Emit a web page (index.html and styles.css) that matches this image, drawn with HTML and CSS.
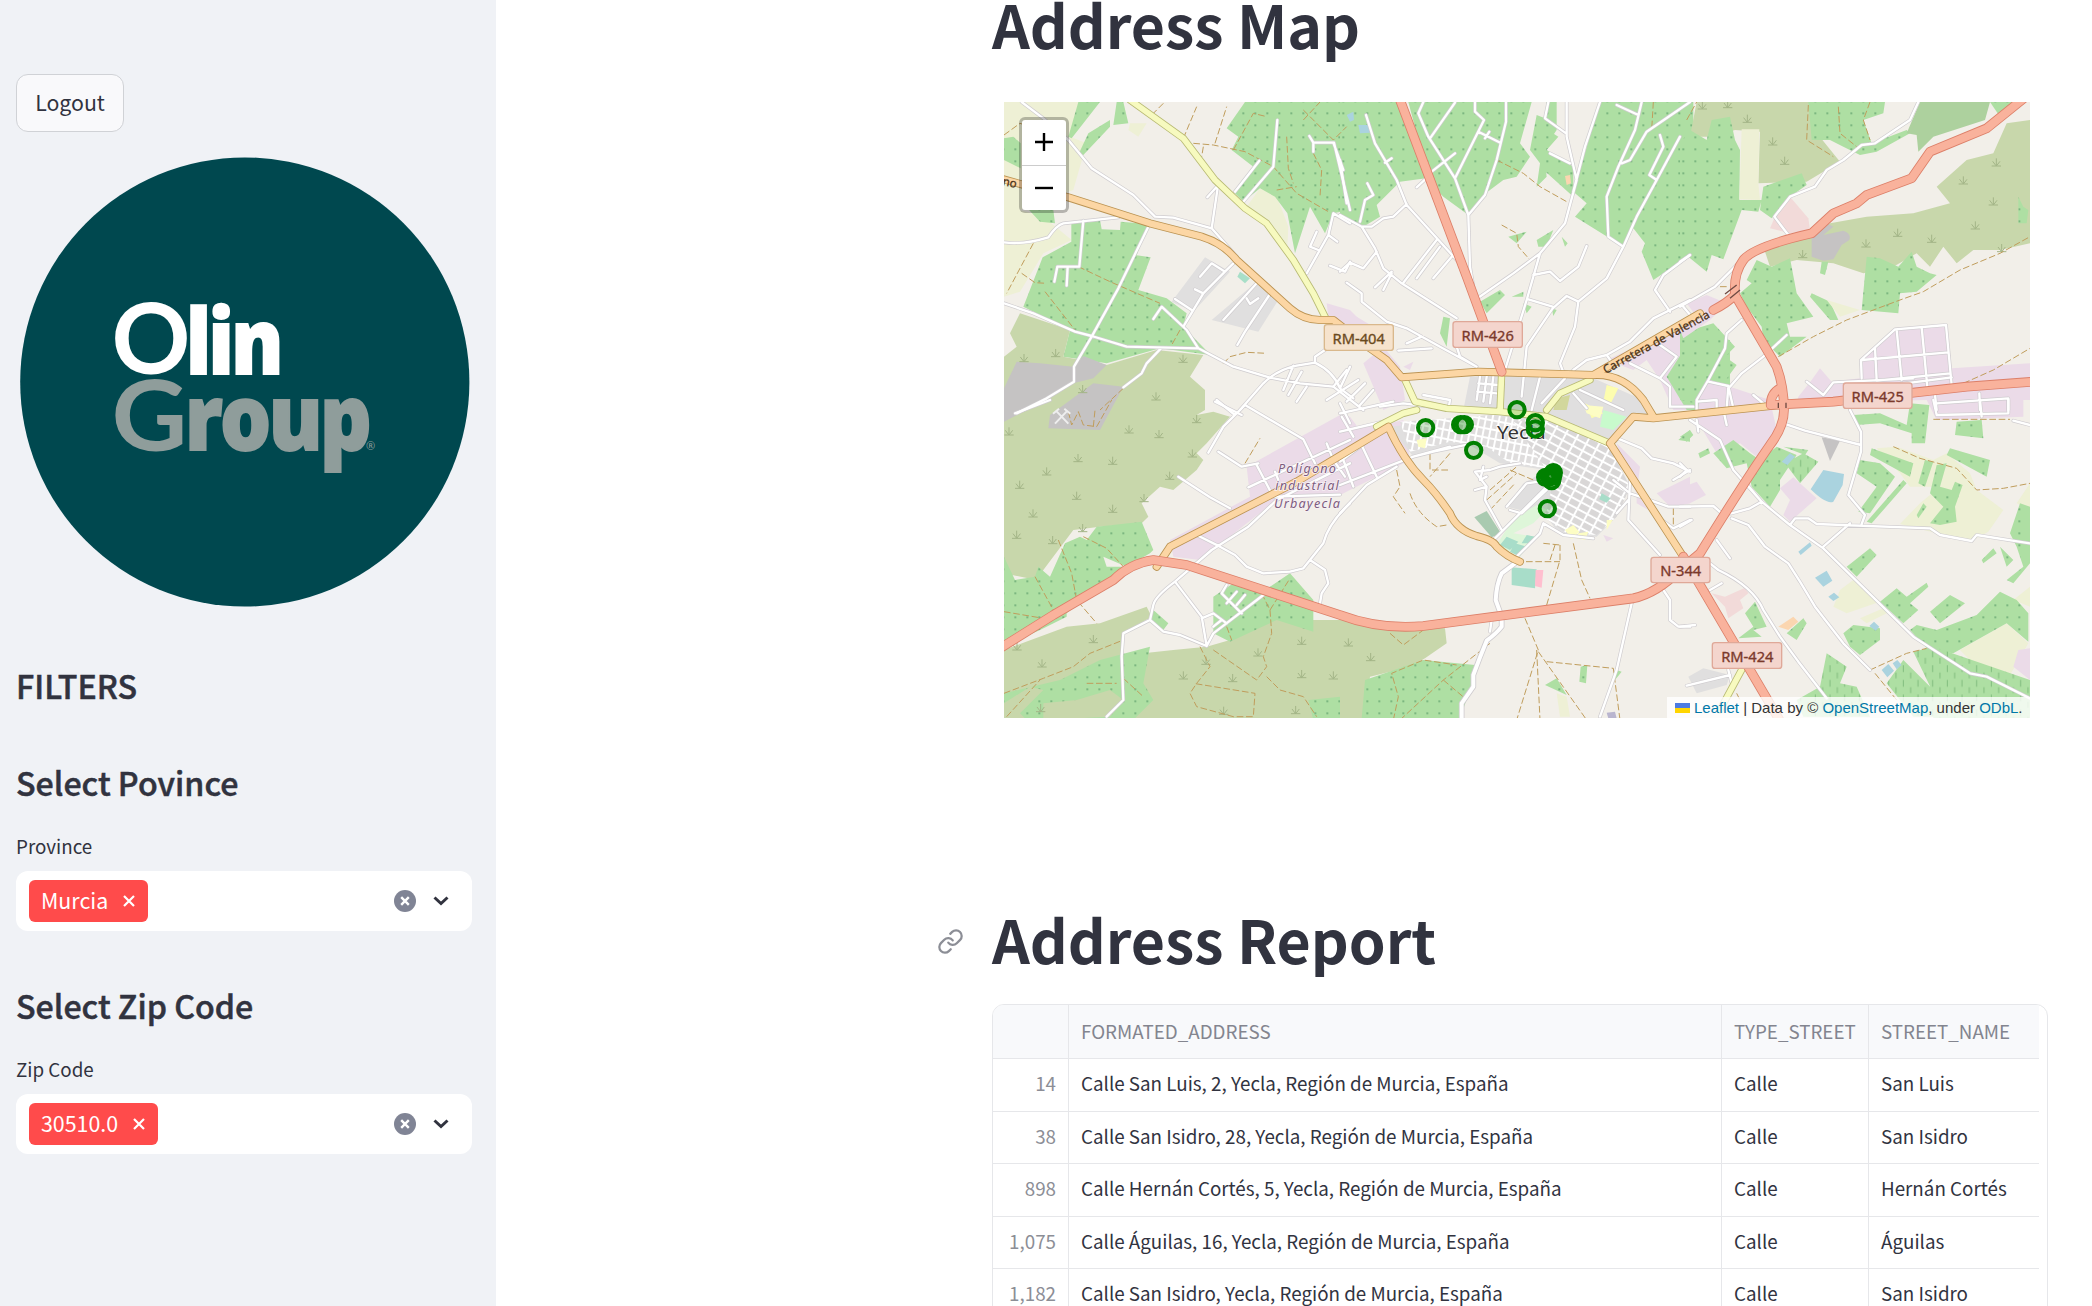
FILE: index.html
```html
<!DOCTYPE html>
<html lang="en">
<head>
<meta charset="utf-8">
<title>Address Map</title>
<link rel="stylesheet" href="styles.css">
</head>
<body>
<div class="app">
<aside class="sidebar">
  <button class="logout">Logout</button>
  <svg class="logo" viewBox="20 157 450 450" role="img" aria-label="Olin Group">
    <circle cx="244.8" cy="382" r="224.6" fill="#00484f"/>
    <g fill="#fff" stroke="#fff">
      <text class="logo-round" x="111.500" y="374" textLength="79" lengthAdjust="spacingAndGlyphs">O</text>
      <text class="logo-heavy" x="186" y="373.500" textLength="95" lengthAdjust="spacingAndGlyphs">lin</text>
    </g>
    <g fill="#8f9d9b" stroke="#8f9d9b">
      <text class="logo-round" x="111.500" y="451" textLength="76" lengthAdjust="spacingAndGlyphs">G</text>
      <text class="logo-heavy" x="185" y="449.500" textLength="184" lengthAdjust="spacingAndGlyphs">roup</text>
      <text class="logo-mark" x="366" y="450" stroke="none">®</text>
    </g>
  </svg>
  <h2 class="filters">FILTERS</h2>
  <section class="filter">
    <h2>Select Povince</h2>
    <label>Province</label>
    <div class="select">
      <span class="tag">Murcia<svg viewBox="0 0 12 12"><path d="M1 1L11 11M11 1L1 11"/></svg></span>
      <svg class="clear" viewBox="0 0 22 22"><circle cx="11" cy="11" r="11"/><path d="M7.200 7.200L14.800 14.800M14.800 7.200L7.200 14.800"/></svg>
      <svg class="chevron" viewBox="0 0 16 10"><path d="M1.500 1.500L8 7.500L14.500 1.500"/></svg>
    </div>
  </section>
  <section class="filter">
    <h2>Select Zip Code</h2>
    <label>Zip Code</label>
    <div class="select">
      <span class="tag">30510.0<svg viewBox="0 0 12 12"><path d="M1 1L11 11M11 1L1 11"/></svg></span>
      <svg class="clear" viewBox="0 0 22 22"><circle cx="11" cy="11" r="11"/><path d="M7.200 7.200L14.800 14.800M14.800 7.200L7.200 14.800"/></svg>
      <svg class="chevron" viewBox="0 0 16 10"><path d="M1.500 1.500L8 7.500L14.500 1.500"/></svg>
    </div>
  </section>
</aside>
<main class="content">
<h1>Address Map</h1>
<div class="map">
<svg class="tiles" viewBox="12 6 3078 1848" preserveAspectRatio="none">
<defs>
  <pattern id="orchard" patternUnits="userSpaceOnUse" x="-8" y="-14" width="36" height="36"><rect width="36" height="36" fill="#aedfa3"/><circle cx="18" cy="18" r="3" fill="#6aa874"/></pattern>
  <pattern id="vineyard" patternUnits="userSpaceOnUse" width="44" height="44"><rect width="44" height="44" fill="#aedfa3"/><path d="M10 4V24M32 26V43" stroke="#81bd7e" stroke-width="3"/></pattern>
  <pattern id="blocks" patternUnits="userSpaceOnUse" width="34" height="23" patternTransform="rotate(28)"><rect width="34" height="23" fill="#fff"/><rect x="3" y="3" width="28" height="17" fill="#d9d7d7"/></pattern>
  <pattern id="oldtown" patternUnits="userSpaceOnUse" width="20" height="27" patternTransform="rotate(11)"><rect width="20" height="27" fill="#fff"/><rect x="3" y="3" width="14" height="21" fill="#dfdddd"/></pattern>
  <symbol id="shrub" viewBox="0 0 30 28" overflow="visible"><path d="M1 25H29M15 25V2M14 24L4 11M16 24L26 11" fill="none" stroke="#a3b587" stroke-width="3"/></symbol>
  <g id="lanes">
    <path d="M65 6L130 55 205 120 275 205 400 285 465 350 520 353 635 385 710 470M12 427Q70 435 145 412Q170 375 190 370L355 352M250 362L238 500H172L163 545M203 500L200 557M445 380L355 565 275 710 222 800V845L140 895 50 940M12 610L100 640 225 695 275 708 380 740 595 745 700 800 810 833 900 850 1000 860M460 657L485 620 560 690 595 745M485 743L440 790 425 820 370 862M700 490L675 515 635 490 600 530M675 515L610 580 550 680M585 568L610 580M525 597L575 630M770 550L670 660M740 595L750 612 775 595M808 585L735 695 712 735M655 250L635 385M655 255L622 292M705 275L778 182M730 305L820 200 832 60M928 108L940 128H1002L1050 330M940 130V155M1000 128L1030 210M1050 370L1000 340 985 405 920 520M985 405L1012 425M950 395L930 440 955 450M990 497L1035 515 1050 485M975 750L945 770V788L890 797Q830 810 790 850L720 930M945 788Q1000 815 1020 865L1060 895M1020 865L1050 800M880 797L850 870M905 815L865 885M920 860L890 905M645 905L725 945"/>
    <g transform="translate(1020)">
    <path d="M78 45L105 130 170 240 200 315 350 480M135 188L155 175M345 8L270 115M250 6L235 40 265 110 345 235 385 345 390 500 400 560M275 215L345 160M230 262L262 232M405 6V35L432 60 345 235M415 95L478 127M435 115L448 95M498 6V65L470 180 435 285 385 345M625 6L615 55 675 98M680 6V110L710 240 675 370 600 460 560 600 495 810M780 6L735 140 700 275M630 160L690 190M600 460L520 520 405 600M830 15L895 45M905 6L885 90 835 200 800 290 805 410 850 440M845 190L870 180 920 95 1050 6M1020 110L950 240 890 350 850 440 800 535 715 605 680 588 638 625 560 740 545 890M580 525L630 515 660 543 715 500 740 438M565 598L638 620M715 605L705 680 660 790 675 830M950 240L928 225 970 140 960 105M0 345L65 380 95 380 130 355 160 350 200 312M60 365L75 300 100 285 82 250M0 180L20 310M65 380L105 445 130 505 185 550 350 655M0 515L30 488 70 505 110 455M155 515L105 562M155 520L130 570M290 420L190 548M300 440L230 535M335 470L280 535M20 548L65 580V605L140 665 200 685 300 740 410 800M200 730L245 710M175 752L275 745M410 800L360 770 350 740M1050 465L970 525 945 570 990 635M700 810L740 780 800 765 870 725 940 655 1050 600M800 765L825 800M870 790L960 835 1010 770 960 735M960 835L990 860V920H1060M20 810L-20 860 70 930M55 840L-40 900M75 850L20 905M100 870L60 915M120 920L190 910 350 930M250 885L330 900 325 930M420 830L410 900M440 830L430 905M460 830L450 910M415 850L475 855M412 875L470 880M600 830L575 930M675 835L605 910M700 880L740 925M720 870L850 930"/>
    </g>
    <g transform="translate(2040)">
    <path d="M715 6L690 60 585 130 545 135 490 180 440 210 405 260 330 290 283 350 325 405M175 490L105 560 0 620M0 485L30 465M10 620L35 650M185 660L140 700 135 745 85 840 50 900V930M320 705L250 770 185 820 150 860M85 845L145 858 160 925M50 905L110 900V930M145 860L140 925M220 885L250 910M380 845L430 885 460 847 700 835M545 835L543 780 645 688 798 675 815 855M545 780L805 757M585 745L590 840M650 690L665 840M725 682L742 860M590 842L810 820M600 860L815 832M765 885L770 930M898 880L900 930M770 910L985 895V930"/>
    </g>
    <g transform="translate(0 900)">
    <path d="M45 40L150 0M650 0L705 45 735 15 910 118 945 190M735 15L670 80 625 158M655 155L725 200 775 190M770 195L820 290M745 262L1050 120M825 215L835 240M980 130L1000 180 1035 230M1025 50L1060 110M535 230L630 292 690 325M1050 310Q985 370 970 430L930 480 910 505 870 515 790 520 740 500 705 465 660 440 590 405M1050 190L940 245 830 300 745 380 635 450 525 545Q465 590 460 615L450 660 370 700 365 770 370 900 320 950M450 660L490 695 540 705 620 738 605 650 525 545M605 655L640 640 680 670M620 738L640 700 790 585M680 555L665 580 725 640M680 610L710 575M710 615L735 585M640 680L665 660M930 480L975 510 985 550 965 580 960 610M820 290L1020 284"/>
    </g>
    <g transform="translate(1020 900)">
    <path d="M0 40L160 5M0 95L150 60M30 70L0 10M0 185L120 95M60 125L110 230M10 180L40 260M0 255L220 170 330 140M0 340L80 255 170 200M220 170L280 155 400 130M610 370L600 400 530 470M485 390L435 300 440 260 405 270M440 260L405 215 450 210 480 200 540 190M440 230L420 240 430 200M465 415L640 240M500 320L560 250 630 240M510 330L545 340 620 270M820 110L905 145 935 175 1000 190 1050 215M820 240L870 280 900 290M870 240L865 360 960 465M900 290L985 320 1050 320M830 340L865 300M970 570L990 600V660L1015 680H1050M875 610L830 810 780 950M1000 240L1050 210M965 360L1000 385 1050 360M455 660L450 695M610 370L670 405 760 415"/>
    </g>
    <g transform="translate(2040 900)">
    <path d="M30 60L120 120 160 210 245 305 330 375 430 445 700 710 870 820 920 830 1050 895M50 60L55 95M130 30L140 75M310 70L375 92 543 135M0 320L100 318 125 340 155 340 210 325 245 305M155 355L205 375 255 440 325 490 360 545 405 620 490 730 570 810M90 490L115 510Q220 560 250 630L300 710 355 785 440 895M245 305L190 240 235 200M510 30L543 95V155L505 285 555 345 545 372M330 375L345 355H385L410 372 750 385 780 405 875 423 890 405 1050 430M430 440L510 370M770 45L985 40V0M900 0L905 50M770 45L760 0M1000 62L1050 75M0 190L20 210 0 230M110 420L150 475M90 570L125 550M0 680L45 675M20 857L150 825M145 810L155 850M0 380L35 360"/>
    </g>
  </g>
  <path id="white-road" d="M1545 1390L1505 1420Q1490 1450 1487 1500L1505 1550V1580Q1490 1600 1460 1622Q1440 1670 1420 1725V1760L1385 1810V1860"/>
  <path id="yellow-road" d="M390 0L550 115 645 240 735 325 800 370 880 480 940 580 980 660M1215 840L1245 905 1340 925 1500 935 1640 950 1830 1030M1505 820L1500 935M1770 840L1680 880 1640 930M1130 980L1210 940 1250 930M2230 1700L2160 1830"/>
  <path id="orange-road" d="M0 235L205 292 450 370 605 410Q670 430 710 480L870 625Q910 660 960 660H1000L1110 745 1160 780 1205 832 1435 815 1780 825Q1870 820 1930 900L1960 950M470 1400L510 1340 890 1145 1165 980Q1210 1080 1270 1140Q1310 1180 1350 1240Q1370 1290 1430 1308Q1480 1320 1490 1340Q1520 1370 1560 1385M1830 1030L1900 950 1960 955 2340 915M1830 1030L2050 1370M1780 825L2100 640"/>
  <path id="red-road" d="M1200 0L1400 530 1505 815M0 1645L160 1545 340 1440Q390 1390 460 1380L560 1395 1020 1545Q1140 1590 1270 1578L1900 1495Q1970 1480 2040 1410L2100 1360Q2230 1150 2310 1035Q2352 980 2352 930Q2352 860 2330 800L2205 585Q2200 520 2230 480Q2260 440 2435 400L2500 340 2570 310 2600 285 2735 235 2790 155 2960 85 3090 -20M2205 585Q2180 610 2140 630M2312 915L2500 905 2900 860 3100 845M2050 1370L2350 1880M2312 915Q2312 880 2340 865"/>
</defs>
<rect x="0" y="0" width="3100" height="1860" fill="#f2efe9"/>
<g class="land">
  <path class="farm" d="M12 6H290L210 110 260 130 220 270 60 330 130 350 215 420 130 460 60 575 12 590ZM390 70L440 70 415 110 385 90ZM780 265L830 290 850 340 865 380 862 440 800 370 740 320Z"/>
  <path class="orchard" d="M12 115L40 110 62 130V205L12 180ZM235 6H300L215 115 205 110ZM350 6H370L385 70 340 75ZM237 160L265 100 330 60V80L250 165ZM78 320L160 330 165 370 120 365ZM230 365L300 360 305 388 360 390 362 365 445 372 410 466 452 472 415 570 500 595 560 640 550 680 632 765 480 745 320 790 190 770 210 690 70 620 128 472 214 425V370ZM735 6H1050V330L1000 340 975 400 930 320 885 460 862 340 825 290 780 265 730 305 705 280 760 200 695 150 715 110 680 85Z"/>
  <path class="scrub" d="M60 640L210 690 190 770 320 795 470 750 610 765 570 830 615 870V930L590 945 640 935 690 950 620 1030 590 1060 610 1080 590 1110 520 1170 480 1160 425 1210 445 1250 425 1270 300 1280 220 1290 130 1410 110 1440 12 1420V770L50 740 30 700ZM12 1650L200 1580 300 1570 440 1520 455 1550 370 1600 365 1760 320 1860H12ZM430 1660L520 1650 620 1640 690 1620 840 1540 940 1560H1020L1335 1585 1340 1630 1275 1675 1230 1700 1110 1730 1090 1860H400Z"/>
  <path class="quarry" d="M12 865L50 785 120 790 220 800 250 768 320 795 280 835 220 850 140 900 12 965ZM150 945L280 850 370 860 300 990 145 985Z"/>
  <path class="orchard" d="M12 1370L45 1440 105 1430 115 1400 150 1430 195 1330 240 1310 260 1320 290 1280 425 1265 460 1350 450 1360 380 1400 310 1370 320 1400 370 1400 200 1540 200 1550 120 1590 12 1640ZM460 1530L505 1570 490 1590 450 1560ZM640 1490L700 1450 780 1480 870 1420 940 1500V1595L830 1560 690 1625 640 1600ZM300 1680L450 1640 430 1750 460 1800 400 1860H12V1780L180 1740ZM925 1800L1020 1790V1860H940Z"/>
  <path class="scrub" d="M12 1860V1810L90 1760 130 1770 60 1840 80 1860ZM130 1810L230 1800 330 1770 370 1800 330 1850 130 1860Z"/>
  <path class="residential" d="M615 472L690 515 580 635 515 605ZM770 545L835 600 775 695 635 660Z"/>
  <path class="industry" d="M980 610L1050 630 1100 680 1030 690 985 650ZM740 1100L1020 945 1050 950 1080 990 1210 960 1230 1080 1020 1185 830 1200 600 1380 520 1370 510 1320 750 1190ZM1090 790L1150 740 1200 800 1215 900 1150 930Z"/>
  <path fill="#a8dfc8" d="M720 515L750 535 735 550 712 530Z"/>
</g>
<g class="land two" transform="translate(1020)">
  <path class="orchard" d="M0 6H170L258 235 180 245 110 315 120 350 70 380 0 345ZM205 6H575L540 130 570 170 530 230 490 240 430 285 385 345 310 290 270 250ZM590 45L615 55 620 6H650L650 90 610 150 620 230 590 260 600 190 570 150ZM600 75L655 110 620 150 700 200 700 290 600 200ZM780 6H1060V460L940 540 905 455 915 430 880 385 850 440 705 350 740 310 700 275ZM505 410L560 395 530 430ZM590 420L640 390 620 440 595 440ZM665 410L683 430 675 440ZM420 605L480 570 495 585 440 640ZM515 590L550 575 550 590ZM300 700L310 650 330 655 320 740ZM550 610L575 620 560 640ZM635 625L650 630 640 648Z"/>
  <path class="industry" d="M800 780L1000 690 1060 640V930H1000L960 840 920 780 880 810ZM-20 630L50 650 100 680 60 690ZM190 800L220 785 210 810Z"/>
  <path class="residential" d="M390 830L490 825 750 830 910 900 930 950 870 960 830 1030 630 960 370 930Z"/>
  <path class="orchard" d="M980 830L1050 720 1170 720V930H1040Z"/>
  <path fill="#fdfdaf" d="M800 855L835 865 810 915 790 905ZM735 910L790 940 755 955Z"/>
  <path fill="#d2d79c" d="M650 895L690 885 680 930H640Z"/>
  <path class="water" d="M20 45L40 35 42 60 30 65ZM55 75H90V98L60 100Z"/>
  <path fill="#fbd6b0" d="M675 228L690 225 693 250 680 255Z"/>
</g>
<g class="land three" transform="translate(2040)">
  <path class="scrub" d="M50 6H400L395 80 480 185 380 245 235 250 240 95 165 90 100 110 30 110ZM250 440L390 410 450 370 560 350 700 340 810 310 770 260 860 180 940 160 980 70 1050 60V430L960 450 880 450 830 490 790 440 750 500 710 460 640 500 550 520 460 490 350 480 270 500Z"/>
  <path class="orchard" d="M0 130L30 90 80 120 95 60 150 50 165 120 180 150 178 300H245L235 335 185 330 130 478 95 465 80 515 0 450ZM385 6H615L610 40 550 60 575 130 680 90 690 100 590 155 540 165 490 140 450 120 395 120ZM250 260L365 220 380 255 330 290 275 355 240 330ZM230 480L275 500 330 475 350 580 400 650 320 670 330 710 380 710 300 770 250 720 245 680 200 620 180 580 215 550 200 540ZM545 630L560 470 600 475 655 500 695 455 710 500 750 520 770 525 710 575 660 580 655 640ZM425 485L445 485 435 525 420 520ZM395 580L450 605 475 660 450 660 390 590ZM0 700L100 670 165 740 135 770 170 795 130 850 85 840 40 905 0 900ZM700 915H745V930H700ZM1015 290L1030 320 1045 330 1040 370 1015 370Z"/>
  <path class="farm" d="M185 88H238L235 250 240 300 178 298ZM440 600L540 630 480 650Z"/>
  <path fill="#add19e" d="M720 6H930L915 60 760 110 715 155 710 105 680 100Z"/>
  <path class="orchard" d="M930 6H1010L960 50Z"/>
  <path fill="#f2dad9" d="M330 290L385 355 390 390 330 400 270 385 285 350Z"/>
  <path class="quarry" d="M395 410L440 370 460 380 430 405 490 392Q515 400 508 420L485 435 460 478 430 482 395 470Z"/>
  <path class="industry" d="M20 610L80 585 140 610 90 660 10 715 0 690 50 650ZM355 890L395 840 420 805 455 845 540 835 545 780 645 685 800 672 815 805 1050 790V900H1030V950L770 960 740 900 350 910ZM60 880L90 840 150 860 270 900 290 990 230 1070 180 1030 110 1060 50 960Z"/>
</g>
<g class="land two" transform="translate(1020 900)">
  <path class="industry" d="M0 90L150 70 170 130 190 170 0 285ZM830 130L900 200 890 280 850 200ZM950 280L1050 230V310L990 320ZM890 280L925 330 890 310ZM790 405L820 415 800 425Z"/>
  <path class="residential" d="M150 80L450 45 600 50 800 120 870 260 830 350 770 410 660 405 620 350 500 320 550 250 620 210 480 190 380 130 220 170Z"/>
  <path fill="url(#oldtown)" d="M180 65L460 45 600 65 620 205 510 190 440 140 330 125 210 155Z"/>
  <path fill="url(#blocks)" d="M520 65L620 60 800 130 870 260 830 350 770 405 680 400 615 355 640 240 600 180Z"/>
  <path fill="#def6d9" d="M470 435L520 355 590 315 620 330 580 370 520 400 585 410 540 470Z"/>
  <path fill="#a8ddc9" d="M500 410L535 425 510 450 480 435ZM525 430L560 440 535 468 510 455ZM560 405L585 410 570 430 545 430ZM515 502L590 508 585 565 515 555ZM785 280L812 295 800 308 778 298Z"/>
  <path fill="#a9cab0" d="M403 352L440 333 483 400 455 412Z"/><path fill="#ffbfcf" d="M587 510L610 510 605 563 585 558Z"/>
  <path fill="#fdfdc4" d="M230 120L260 115 255 145 235 140ZM675 390L700 375 718 395 695 418ZM715 400L745 395 735 420 710 415ZM730 15L790 20 780 55 740 40ZM800 360L818 360 800 390Z"/>
  <path fill="#c8facc" d="M790 30L860 50 820 90 780 80Z"/>
  <path class="orchard" d="M75 840L250 780 405 795 390 870 360 955H65ZM615 855L650 835 680 885ZM722 800L742 795 738 850 718 845ZM830 810L845 815 825 840ZM1015 120L1050 90V125Z"/>
  <path class="farm" d="M650 880L680 890 690 950H660Z"/><path fill="#b9b5cf" d="M800 938L825 935 830 955H805Z"/>
</g>
<g class="land three" transform="translate(2040 900)">
  <path class="farm" d="M590 145L650 140 760 180 800 160 870 220 890 270 970 330 925 395 870 425 660 372 720 310 780 260 690 260 660 220ZM480 570L520 540 600 605 500 640 460 620ZM540 655L620 620 640 630 560 670ZM840 750L980 670 1045 730 990 825 870 780ZM1050 250L1010 310 1050 330ZM1000 600L1050 560V620Z"/>
  <path class="orchard" d="M520 45L600 40 680 75 690 10 748 15 735 130 695 130 695 100 600 70 530 75ZM575 145L700 190 690 230 570 165ZM540 180L600 190 645 230 570 340 535 335 590 260 530 220ZM670 240L680 250 575 370 560 365ZM735 180L760 185 735 260 715 250ZM770 195L800 190 780 260 815 270 825 245 848 255 825 320 830 365 780 375 750 370 790 320 750 280ZM710 345L730 310 740 320 715 355ZM810 145L930 180 920 230 800 165ZM100 160L160 120 210 160 240 180 290 140 350 165 300 240 300 270 270 320 215 260 200 190 140 205ZM310 140L385 150 375 165ZM500 500L570 445 590 465 530 530ZM600 605L650 565 680 590 740 548 745 560 690 610 715 630 670 670ZM690 690L710 675 770 690 890 645 960 575 1010 600 1045 640V725L980 670 820 760 745 750ZM750 635L810 585 855 610 780 670ZM490 700L520 675 600 685 600 720 540 765 510 740ZM320 700L370 655 380 670 350 720ZM830 65L905 60 910 115 825 105ZM990 400L1020 310 1050 320V490L1000 550 980 540 1030 500 1010 440ZM905 480L940 445 950 460 910 490ZM960 440L1000 480 980 500ZM195 640L225 605 260 680 220 690 245 710 175 715 220 680ZM0 110L30 90 40 105 20 125ZM55 160L85 145 90 160 60 175Z"/>
  <path fill="url(#vineyard)" d="M700 755L760 740 1050 840V955H760V880ZM350 900L420 860 440 760 500 800 480 850 530 860 570 950H370ZM620 850L670 780 770 880 760 950H700ZM315 190L370 160 415 185 360 250Z"/>
  <path class="industry" d="M340 232L410 295 330 365 310 345 330 300 300 265ZM0 265L50 245 78 285 30 310 0 315ZM1015 750L1050 745V840L1000 800Z"/>
  <path class="quarry" d="M425 112L480 122 450 183Z"/><path class="residential" d="M25 830L70 805 150 825 140 855 50 880Z"/>
  <path fill="#f2dad9" d="M95 580L135 590 195 563 205 580 180 600 190 625 145 655 135 620Z"/>
  <path fill="#fbd6b0" d="M295 680L340 650 355 665 325 690Z"/>
  <path class="water" d="M430 210L492 222 488 255 460 305Q440 315 392 268ZM305 185L330 160 345 170 322 195ZM355 455L390 427 395 437 362 465ZM405 533L440 512 457 542 430 560ZM445 590L462 578 478 592 460 603ZM568 678L582 665 598 680 587 692ZM605 810L625 792 642 812 622 832ZM638 790L652 780 665 795 650 808Z"/>
</g>
<g class="shrubs">
  <use href="#shrub" x="57" y="760" width="30" height="28"/><use href="#shrub" x="152" y="745" width="30" height="28"/><use href="#shrub" x="534" y="762" width="30" height="28"/><use href="#shrub" x="233" y="853" width="30" height="28"/><use href="#shrub" x="453" y="875" width="30" height="28"/>
  <use href="#shrub" x="12" y="980" width="30" height="28"/><use href="#shrub" x="372" y="974" width="30" height="28"/><use href="#shrub" x="462" y="988" width="30" height="28"/><use href="#shrub" x="575" y="943" width="30" height="28"/><use href="#shrub" x="219" y="1060" width="30" height="28"/><use href="#shrub" x="323" y="1068" width="30" height="28"/><use href="#shrub" x="562" y="1046" width="30" height="28"/><use href="#shrub" x="125" y="1100" width="30" height="28"/><use href="#shrub" x="44" y="1140" width="30" height="28"/><use href="#shrub" x="494" y="1113" width="30" height="28"/><use href="#shrub" x="215" y="1173" width="30" height="28"/><use href="#shrub" x="323" y="1212" width="30" height="28"/><use href="#shrub" x="417" y="1180" width="30" height="28"/><use href="#shrub" x="84" y="1226" width="30" height="28"/><use href="#shrub" x="35" y="1290" width="30" height="28"/><use href="#shrub" x="143" y="1306" width="30" height="28"/><use href="#shrub" x="233" y="1270" width="30" height="28"/>
  <use href="#shrub" x="265" y="1603" width="30" height="28"/><use href="#shrub" x="111" y="1676" width="30" height="28"/><use href="#shrub" x="36" y="1625" width="30" height="28"/><use href="#shrub" x="107" y="1810" width="30" height="28"/><use href="#shrub" x="535" y="1712" width="30" height="28"/><use href="#shrub" x="603" y="1668" width="30" height="28"/><use href="#shrub" x="683" y="1720" width="30" height="28"/><use href="#shrub" x="759" y="1643" width="30" height="28"/><use href="#shrub" x="890" y="1608" width="30" height="28"/><use href="#shrub" x="890" y="1708" width="30" height="28"/><use href="#shrub" x="985" y="1712" width="30" height="28"/><use href="#shrub" x="872" y="1816" width="30" height="28"/><use href="#shrub" x="656" y="1818" width="30" height="28"/><use href="#shrub" x="1030" y="1613" width="30" height="28"/><use href="#shrub" x="1097" y="1657" width="30" height="28"/>
  <use href="#shrub" x="2092" y="2" width="30" height="28"/><use href="#shrub" x="2168" y="-2" width="30" height="28"/><use href="#shrub" x="2227" y="42" width="30" height="28"/><use href="#shrub" x="2303" y="110" width="30" height="28"/><use href="#shrub" x="2339" y="168" width="30" height="28"/><use href="#shrub" x="2583" y="416" width="30" height="28"/><use href="#shrub" x="2678" y="384" width="30" height="28"/><use href="#shrub" x="2780" y="402" width="30" height="28"/><use href="#shrub" x="2911" y="362" width="30" height="28"/><use href="#shrub" x="2965" y="290" width="30" height="28"/><use href="#shrub" x="2875" y="227" width="30" height="28"/><use href="#shrub" x="2974" y="173" width="30" height="28"/><use href="#shrub" x="2990" y="430" width="30" height="28"/><use href="#shrub" x="2393" y="448" width="30" height="28"/>
</g>
<path class="trail" d="M490 10L450 50 480 60M100 430L20 580M65 520L105 548 140 550M235 500L330 545 480 610M135 575L225 690M540 690L515 735M550 115L590 20M580 130L640 135 735 155 820 200 890 280 985 335M645 130L680 20M610 140L605 170M700 150L760 40 800 50M860 110L865 205 880 250M830 270L890 260M910 30L1000 120 1040 80M910 60L960 6M670 790L690 770 740 757 800 760M940 160L965 210 960 290M12 105L60 70 90 80M370 865L300 930M205 935L215 975 235 935 250 975 290 980 335 900M280 980L285 930M1490 180L1570 220 1620 260 1700 305M1505 375L1550 400 1555 440 1590 480M2425 15L2420 120 2500 170M2515 20L2520 100 2570 140M2610 6L2590 60 2610 120M2335 770L2440 710 2540 660 2700 600 2770 575 2880 510 3000 460 3090 410M2890 850L2980 810 3090 745M1960 6L1955 90M2060 60L2090 6M2180 560L2150 560M735 1090L780 1015M175 1320L215 1420 230 1500 290 1570M105 1430L160 1530M12 1535L130 1555M250 1310L320 1345 370 1400M12 1780L130 1735 220 1700 270 1660 370 1620M20 1850L120 1740M260 1750L350 1750M600 1640L630 1700 590 1750 570 1780 590 1820 700 1850 760 1850 765 1780 580 1750M640 1650L770 1740 800 1700 790 1670 815 1600 810 1530 790 1490M810 1530L870 1435M800 1730L840 1770 910 1790 950 1850M370 1735L430 1790M680 1580L695 1620M1170 1600L1210 1635 1270 1590M1180 1860L1195 1790 1175 1720 1270 1680 1370 1695M1200 1860L1330 1740 1470 1630M1330 1740L1395 1795M1575 1555L1615 1650 1550 1860M1610 1650L1620 1860M1615 1655L1760 1860M1640 1685L1840 1705 1860 1860M1640 1515L1680 1380 1680 1335M1720 1330L1745 1440 1770 1495M1550 1385H1680M1630 1330L1680 1335M1650 1380L1665 1335M1190 1110L1200 1160 1180 1190 1215 1240M1230 1180Q1250 1240 1310 1280L1340 1275M1290 1060L1290 1110 1345 1110M1350 1060L1290 1130M2020 1225V1280M2680 1040L2760 1075 2870 1105 2930 1170 3010 1165 3090 1150M2800 958H3030M2610 1710L2720 1660 2780 1645M2625 1720L2690 1800M2210 1780L2220 1800M1460 1200L1550 1120M1470 1230L1545 1150M1470 1170L1550 1100M1530 1110L1600 1140"/>
<use href="#lanes" class="lane case"/><use href="#lanes" class="lane"/>
<use href="#white-road" class="road white-case"/><use href="#white-road" class="road white"/>
<use href="#yellow-road" class="road yellow-case"/><use href="#yellow-road" class="road yellow"/>
<use href="#orange-road" class="road orange-case"/><use href="#orange-road" class="road orange"/>
<use href="#red-road" class="road red-case"/><use href="#red-road" class="road red"/>
<path d="M2175 582L2210 555M2190 595L2220 570M2335 908V924M2358 908V924" stroke="#6f4a42" stroke-width="4"/>
<g transform="translate(185 946)" stroke="#eee" stroke-width="6" fill="none"><path d="M-20 25L18 -15M20 25L-18 -15M-26 -5L-8 -20M26 -5L8 -20"/></g>
<g class="shields">
  <g class="amber"><rect x="973" y="674" width="207" height="77" rx="8"/><text x="1076" y="732">RM-404</text></g>
  <rect x="1359" y="665" width="208" height="77" rx="8"/><text x="1463" y="722">RM-426</text>
  <rect x="2530" y="849" width="206" height="76" rx="8"/><text x="2633" y="906">RM-425</text>
  <rect x="1953" y="1372" width="177" height="76" rx="8"/><text x="2042" y="1428">N-344</text>
  <rect x="2137" y="1628" width="208" height="77" rx="8"/><text x="2242" y="1685">RM-424</text>
</g>
<text class="street" transform="translate(1817 822) rotate(-28.500)" textLength="358">Carretera de Valencia</text>
<text class="street" x="6" y="255" transform="rotate(12 6 255)">no</text>
<g class="zone"><text x="921" y="1118" textLength="174">Polígono</text><text x="921" y="1171" textLength="190">industrial</text><text x="921" y="1225" textLength="198">Urbayecla</text></g>
<text class="town" x="1564" y="1018" textLength="146" lengthAdjust="spacingAndGlyphs">Yecla</text>
<g class="markers" transform="translate(1020 900)">
  <circle cx="257" cy="83" r="23"/><circle cx="362" cy="74" r="23"/><circle cx="373" cy="74" r="23"/><circle cx="401" cy="151" r="23"/><circle cx="531" cy="29" r="23"/><circle cx="586" cy="68" r="23"/><circle cx="586" cy="87" r="23"/><circle cx="617" cy="232" r="23"/><circle cx="640" cy="218" r="23"/><circle cx="635" cy="242" r="23"/><circle cx="628" cy="230" r="23"/><circle cx="638" cy="228" r="23"/><circle cx="622" cy="326" r="23"/>
</g>
</svg>
<div class="zoom"><button><svg viewBox="0 0 18 18"><path d="M9 0V18M0 9H18"/></svg></button><button><svg viewBox="0 0 18 18"><path d="M0 9H18"/></svg></button></div>
<div class="credit"><svg viewBox="0 0 15 10"><path fill="#4c7be1" d="M0 0H15V5H0Z"/><path fill="#ffd500" d="M0 5H15V10H0Z"/></svg><a>Leaflet</a> | Data by © <a>OpenStreetMap</a>, under <a>ODbL</a>.</div>
</div>
<div class="title"><svg class="link" viewBox="0 0 24 24"><path d="M10 13a5 5 0 0 0 7.540.54l3-3a5 5 0 0 0-7.070-7.070l-1.720 1.710M14 11a5 5 0 0 0-7.540-.54l-3 3a5 5 0 0 0 7.070 7.070l1.710-1.710"/></svg><h1>Address Report</h1></div>
<div class="table">
  <div class="row head"><span></span><span>FORMATED_ADDRESS</span><span>TYPE_STREET</span><span>STREET_NAME</span></div>
  <div class="row"><span>14</span><span>Calle San Luis, 2, Yecla, Región de Murcia, España</span><span>Calle</span><span>San Luis</span></div>
  <div class="row"><span>38</span><span>Calle San Isidro, 28, Yecla, Región de Murcia, España</span><span>Calle</span><span>San Isidro</span></div>
  <div class="row"><span>898</span><span>Calle Hernán Cortés, 5, Yecla, Región de Murcia, España</span><span>Calle</span><span>Hernán Cortés</span></div>
  <div class="row"><span>1,075</span><span>Calle Águilas, 16, Yecla, Región de Murcia, España</span><span>Calle</span><span>Águilas</span></div>
  <div class="row"><span>1,182</span><span>Calle San Isidro, Yecla, Región de Murcia, España</span><span>Calle</span><span>San Isidro</span></div>
</div>
</main>
</div>
</body>
</html>
```
FILE: styles.css
```css
* { box-sizing: border-box; }
body { margin: 0; background: #fff; color: #31333f; font-family: "Noto Sans CJK SC", sans-serif; overflow: hidden; }
h1, h2 { margin: 0; }
button { padding: 0; font: inherit; color: inherit; }
.app { display: flex; height: 1306px; overflow: hidden; }

.sidebar { width: 496px; height: 1306px; flex: none; padding: 74px 24px 0 16px; background: #f0f2f6; display: flex; flex-direction: column; align-items: flex-start; }
.logout { width: 108px; height: 58px; flex: none; border: 1px solid #d0d2d6; border-radius: 12px; background: #f9f9fb; font-size: 21.300px; line-height: 54px; padding-bottom: 2px; }
.logo { width: 450px; height: 450px; margin: 25px 0 0 4px; flex: none; }
.logo-round { font: 700 97px Lato, sans-serif; stroke-width: 0; }
.logo-heavy { font: 800 91px "Open Sans", sans-serif; letter-spacing: -3px; stroke-width: 2; }
.logo-mark { font: 11px "Open Sans", sans-serif; }
.sidebar h2 { font-size: 32.200px; line-height: 44px; font-weight: 500; white-space: nowrap; -webkit-text-stroke: .5px #31333f; }
.filters { margin-top: 56px; }
.filter { width: 456px; margin-top: 53px; }
.filter label { display: block; margin-top: 27px; font-size: 18.800px; line-height: 30px; }
.filter + .filter { margin-top: 52px; }
.select { margin-top: 10px; height: 60px; padding: 0 23px 0 13px; background: #fff; border-radius: 12px; display: flex; align-items: center; }
.tag { height: 42px; padding: 0 13px 0 12px; border-radius: 6px; background: #ff4b4b; color: #fff; font-size: 21.400px; line-height: 38px; padding-bottom: 2px; display: flex; align-items: center; gap: 15px; }
.tag svg { width: 12px; height: 12px; margin-top: 2px; fill: none; stroke: #fff; stroke-width: 2.200; }
.clear { width: 22px; height: 22px; margin-left: auto; fill: #808495; }
.clear path { stroke: #fff; stroke-width: 2.400; }
.chevron { width: 16px; height: 10px; margin-left: 17px; fill: none; stroke: #31333f; stroke-width: 3; }

.content { flex: 1; padding-left: 496px; display: flex; flex-direction: column; align-items: flex-start; }
h1 { font-size: 59px; line-height: 80px; font-weight: 700; white-space: nowrap; }
.content > h1 { margin-top: -16px; }
.map { position: relative; width: 1026px; height: 616px; margin: 38px 0 0 12px; overflow: hidden; flex: none; }
.tiles { display: block; width: 1026px; height: 616px; }
.farm { fill: #eef0d5; }
.orchard { fill: url(#orchard); }
.scrub { fill: #c8d7ab; }
.quarry { fill: #c5c3c3; }
.residential { fill: #e0dfdf; }
.industry { fill: #ebdbe8; }
.water { fill: #aad3df; }
.trail { fill: none; stroke: #c09d5c; stroke-width: 3; stroke-dasharray: 20 8; }
.lane { fill: none; stroke: #fff; stroke-width: 7; stroke-linejoin: round; stroke-linecap: round; }
.lane.case { stroke: #cfcccf; stroke-width: 11; }
.road { fill: none; stroke-linejoin: round; stroke-linecap: round; }
.white { stroke: #fff; stroke-width: 12; }
.white-case { stroke: #cfcccf; stroke-width: 17; }
.yellow { stroke: #f7fabf; stroke-width: 17; }
.yellow-case { stroke: #b8ba74; stroke-width: 22; }
.orange { stroke: #fcd6a4; stroke-width: 19; }
.orange-case { stroke: #bb9352; stroke-width: 24; }
.red { stroke: #f9b29c; stroke-width: 24; }
.red-case { stroke: #dc7f68; stroke-width: 29; }
.shields rect { fill: #f4d5cd; stroke: #dfa898; stroke-width: 4; }
.shields text { font: 400 44px "Noto Sans", sans-serif; fill: #7b392c; stroke: #7b392c; stroke-width: 1; text-anchor: middle; }
.shields .amber rect { fill: #f6e3cd; stroke: #d9b88c; }
.shields .amber text { fill: #6b4a1d; stroke: #6b4a1d; }
.street { font: 400 35px "Noto Sans", sans-serif; fill: #4a3218; stroke: #4a3218; stroke-width: .8; }
.zone text { font: italic 400 38px "Noto Sans", sans-serif; fill: #7d5c7d; text-anchor: middle; paint-order: stroke; stroke: #f7f0f5; stroke-width: 5; }
.town { font: 53px "Noto Sans", sans-serif; fill: #333; text-anchor: middle; paint-order: stroke; stroke: #fff; stroke-width: 4; }
.markers circle { fill: rgba(0, 128, 0, .2); stroke: green; stroke-width: 12; }
.zoom { position: absolute; left: 15px; top: 15px; width: 50px; height: 96px; border: 3px solid rgba(0, 0, 0, .25); border-radius: 6px; background: #fff; background-clip: padding-box; display: flex; flex-direction: column; }
.zoom button { flex: 1; border: 0; background: none; display: grid; place-items: center; }
.zoom button + button { border-top: 1px solid #ccc; }
.zoom svg { width: 18px; height: 18px; stroke: #000; stroke-width: 2.400; }
.credit { position: absolute; right: 0; bottom: 0; width: 363px; height: 21px; padding-left: 8px; background: rgba(255, 255, 255, .8); color: #333; font: 15px/21px "Liberation Sans", Arial, sans-serif; white-space: nowrap; }
.credit svg { width: 15px; height: 10px; margin-right: 4px; }
.credit a { color: #0078a8; }
.title { display: flex; align-items: center; margin: 181px 0 0 -55px; gap: 28px; }
.link { width: 27px; height: 27px; margin-top: 4px; fill: none; stroke: #8c8e96; stroke-width: 2; stroke-linecap: round; stroke-linejoin: round; }

.table { width: 1056px; height: 330px; margin-top: 25px; flex: none; border: 1px solid #e6e7ea; border-radius: 12px 12px 0 0; overflow: hidden; font-size: 18.800px; padding-right: 8px; }
.row { display: grid; grid-template-columns: 76px 653px 147px 1fr; height: 52.500px; line-height: 48px; }
.row span { border-right: 1px solid #e6e7ea; border-bottom: 1px solid #e6e7ea; padding-left: 12px; white-space: nowrap; }
.row span:last-child { border-right: 0; }
.row span:first-child { text-align: right; padding: 0 12px 0 0; color: #8c8e96; }
.row.head { height: 54px; line-height: 52px; background: #f8f9fb; color: #83858f; }
```
